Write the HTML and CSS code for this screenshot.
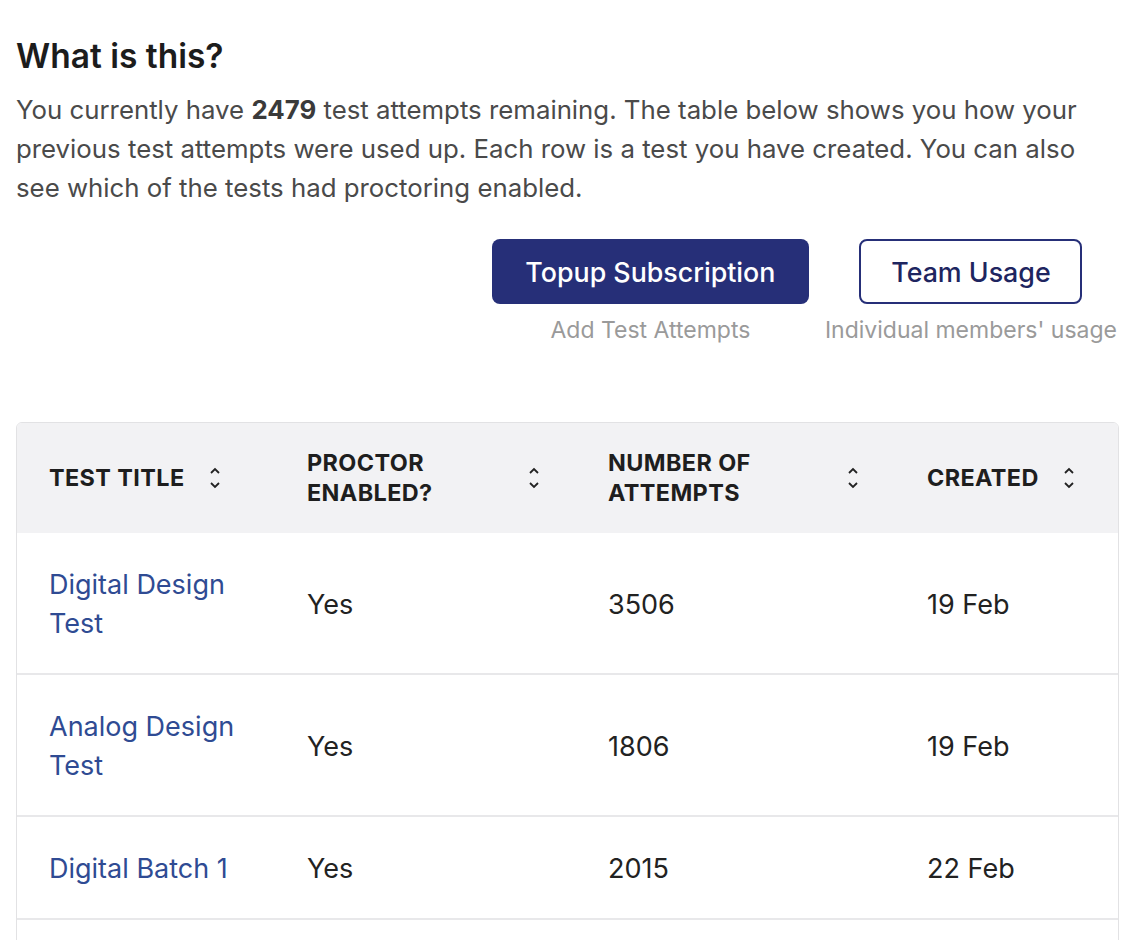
FILE: index.html
```html
<!DOCTYPE html>
<html lang="en">
<head>
  <meta charset="UTF-8">
  <title>Test Attempts Usage</title>
  <link rel="stylesheet" href="styles.css">
</head>
<body>

  <h2 class="title">What is this?</h2>
  <p class="intro">You currently have <b>2479</b> test attempts remaining. The table below shows you how your previous test attempts were used up. Each row is a test you have created. You can also see which of the tests had proctoring enabled.</p>

  <div class="actions">
    <div class="action">
      <button class="btn btn-primary">Topup Subscription</button>
      <span class="hint">Add Test Attempts</span>
    </div>
    <div class="action">
      <button class="btn btn-outline">Team Usage</button>
      <span class="hint">Individual members' usage</span>
    </div>
  </div>

  <table class="usage">
    <colgroup>
      <col class="c1"><col class="c2"><col class="c3"><col class="c4">
    </colgroup>
    <thead>
      <tr>
        <th><div class="th"><span class="th-text short">Test Title</span><svg class="sort" viewBox="0 0 12 24"><path d="M2 7l4-4 4 4M2 17l4 4 4-4"/></svg></div></th>
        <th><div class="th"><span class="th-text">Proctor Enabled?</span><svg class="sort" viewBox="0 0 12 24"><path d="M2 7l4-4 4 4M2 17l4 4 4-4"/></svg></div></th>
        <th><div class="th"><span class="th-text">Number of Attempts</span><svg class="sort" viewBox="0 0 12 24"><path d="M2 7l4-4 4 4M2 17l4 4 4-4"/></svg></div></th>
        <th><div class="th"><span class="th-text short">Created</span><svg class="sort" viewBox="0 0 12 24"><path d="M2 7l4-4 4 4M2 17l4 4 4-4"/></svg></div></th>
      </tr>
    </thead>
    <tbody>
      <tr><td><a href="#">Digital Design Test</a></td><td>Yes</td><td>3506</td><td>19 Feb</td></tr>
      <tr><td><a href="#">Analog Design Test</a></td><td>Yes</td><td>1806</td><td>19 Feb</td></tr>
      <tr><td><a href="#">Digital Batch 1</a></td><td>Yes</td><td>2015</td><td>22 Feb</td></tr>
      <tr><td><a href="#">Analog Batch 1</a></td><td>No</td><td>1204</td><td>24 Feb</td></tr>
    </tbody>
  </table>

</body>
</html>
```

FILE: styles.css
```css
body {
  font-family: Inter, "Noto Sans", sans-serif;
  margin: 0;
  padding: 0 19px 0 16px;
  background: #fff;
  color: #222;
}
.title {
  font-size: 33.5px;
  font-weight: 600;
  margin: 36px 0 14px;
  color: #1c1c1c;
}
.intro {
  font-size: 25.8px;
  line-height: 39px;
  color: #4a4a4a;
  margin: 0 0 32px;
}
.intro b {
  color: #3a3a3a;
}
.actions {
  display: flex;
  justify-content: flex-end;
  gap: 16px;
}
.action {
  display: flex;
  flex-direction: column;
  align-items: center;
  gap: 12px;
}
.btn {
  font-family: inherit;
  font-size: 26.8px;
  font-weight: 500;
  height: 65px;
  border-radius: 8px;
  cursor: pointer;
}
.btn-primary {
  width: 317px;
  background: #262f78;
  border: none;
  color: #fff;
}
.btn-outline {
  width: 223px;
  background: #fff;
  border: 2px solid #262f78;
  color: #1e2560;
}
.hint {
  font-size: 23px;
  color: #9a9a9a;
}
.usage {
  width: 1101px;
  margin-top: 78px;
  border-collapse: separate;
  border-spacing: 0;
  table-layout: fixed;
  border: 1px solid #e2e2e4;
  border-radius: 6px;
  overflow: hidden;
}
.c1 { width: 258px; }
.c2 { width: 301px; }
.c3 { width: 319px; }
.c4 { width: 223px; }
th {
  background: #f2f2f4;
  padding: 25px 36px 25px 32px;
  text-align: left;
}
.th {
  display: flex;
  align-items: center;
  gap: 24px;
}
.th-text {
  flex: 1;
  font-size: 23.4px;
  line-height: 30px;
  font-weight: 700;
  text-transform: uppercase;
  letter-spacing: 0.4px;
  color: #1e1e1e;
}
.th-text.short {
  flex: none;
}
.sort {
  width: 12px;
  height: 24px;
  flex: none;
  fill: none;
  stroke: #222;
  stroke-width: 1.8;
}
td {
  padding: 32px 30px 30px 32px;
  font-size: 27px;
  line-height: 39px;
  border-top: 2px solid #e8e8ea;
  color: #222;
}
tbody tr:first-child td {
  border-top: none;
}
td a {
  color: #2f4b93;
  text-decoration: none;
}
```
